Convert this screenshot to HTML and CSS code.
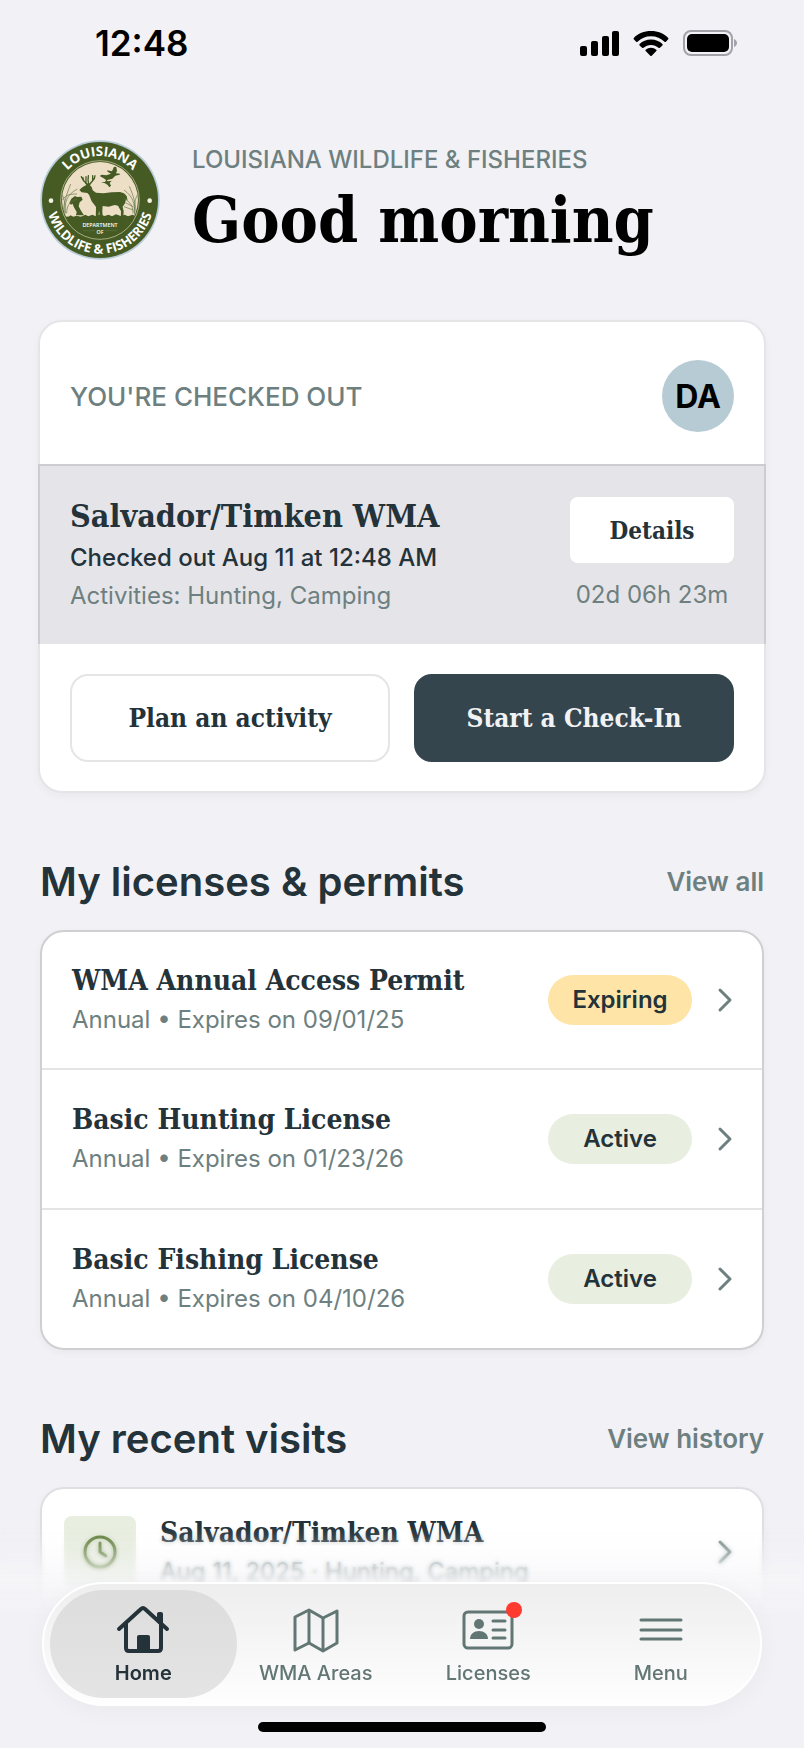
FILE: index.html
```html
<!DOCTYPE html>
<html lang="en">
<head>
    <meta charset="UTF-8">
    <meta name="viewport" content="width=device-width, initial-scale=1.0">
    <title>Louisiana Wildlife & Fisheries</title>
    <link rel="stylesheet" href="styles.css">
</head>
<body>

    <!-- Status bar -->
    <div class="status-bar">
        <span class="time">12:48</span>
        <div class="status-icons">
            <svg width="39" height="25" viewBox="0 0 39 25">
                <rect x="0" y="15" width="7" height="10" rx="2"/>
                <rect x="11" y="10" width="7" height="15" rx="2"/>
                <rect x="22" y="5" width="7" height="20" rx="2"/>
                <rect x="32" y="0" width="7" height="25" rx="2"/>
            </svg>
            <svg width="36" height="25" viewBox="0 0 36 25">
                <path d="M18 0C11 0 5 2.600 .8 6.900c-.4.400-.4 1 0 1.400l2.300 2.400c.4.400 1 .4 1.400 0C8 7.200 12.700 5.200 18 5.200s10 2 13.500 5.500c.4.400 1 .4 1.400 0l2.300-2.400c.4-.4.400-1 0-1.400C31 2.600 25 0 18 0z"/>
                <path d="M18 8.500c-4.500 0-8.500 1.700-11.400 4.500-.4.400-.4 1 0 1.400l2.500 2.400c.4.400 1 .4 1.400 0 2-1.800 4.600-2.900 7.500-2.900s5.500 1.100 7.500 2.900c.4.400 1 .4 1.400 0l2.500-2.400c.4-.4.400-1 0-1.400C26.500 10.200 22.500 8.500 18 8.500z"/>
                <path d="M18 16.800c-2 0-3.900.7-5.300 2-.4.300-.4.900 0 1.300l4.600 4.600c.4.400 1 .4 1.400 0l4.600-4.600c.4-.4.400-1 0-1.300-1.400-1.300-3.300-2-5.300-2z"/>
            </svg>
            <svg width="55" height="26" viewBox="0 0 55 26">
                <rect x="1" y="1" width="48" height="24" rx="7" fill="none" stroke="#a3a2a8" stroke-width="2"/>
                <rect x="4" y="4" width="42" height="18" rx="5"/>
                <path d="M51 9c2 .8 3 2.300 3 4s-1 3.200-3 4z" fill="#a3a2a8"/>
            </svg>
        </div>
    </div>

    <main class="page">

        <!-- Greeting -->
        <header class="greeting">
            <svg class="seal" viewBox="30 30 360 360">
                <defs>
                    <path id="arcTop" d="M78 210a132 132 0 0 1 264 0"/>
                    <path id="arcBottom" d="M49 210a161 161 0 0 0 322 0"/>
                    <clipPath id="scene"><circle cx="210" cy="210" r="114"/></clipPath>
                </defs>
                <circle cx="210" cy="210" r="179" fill="#b6cbd6"/>
                <circle cx="210" cy="210" r="174" fill="#455b23"/>
                <circle cx="210" cy="210" r="118" fill="none" stroke="#d9d3b0" stroke-width="2"/>
                <g clip-path="url(#scene)">
                    <rect x="90" y="90" width="240" height="170" fill="#ecdfc6"/>
                    <path fill="#455b23" d="M90 266l12-6 9 4 11-8 8 5 10-4 12 4 14-7 9 5 12-5 10 5 14-6 12 5 13-4 10 5 12-6 14 5 12-4 10 5 14-5 12 6v75H90z"/>
                    <!-- deer -->
                    <path fill="#455b23" d="M148 180l10-9 11-6-5-9 11 5 9-3-4 8 5 5 3 10 10 7 22 2 25-3 25-1 12 4 8 8 3 14-5-4-3 12-7 10 3 14-2 30h-7l1-30-9-17-10-2-18 5-18-2-1 16 2 30h-7l-5-32-3 32h-7l1-43-13-17-8-20-5-5-17-2z"/>
                    <g fill="none" stroke="#455b23" stroke-width="4" stroke-linecap="round">
                        <path d="M171 163c-5-7-13-8-12-20M161 153l-7-13M176 162c-2-9-3-12-1-25M181 161c4-8 14-10 14-24M188 151l0-14M168 158l0-18"/>
                    </g>
                    <!-- birds -->
                    <path fill="#455b23" d="M209 138l6-4 14 2 14-5-10-6-2-4 15 3 6-14 7 1 2 11-3 8 12 1-1 3-13 3-9 9-18 5-8-6z"/>
                    <path fill="#455b23" d="M213 157l12-1 4-7 5 5 11-2-6 7 4 8-5 5-5-7-8-5z"/>
                    <!-- fish -->
                    <path fill="#455b23" d="M118 219l6-13 11-8 6 3 13-1 4 9-9 8-3 12 8 15 8 12h-24l2-10-9-16-3-9-5 3z"/>
                    <!-- reeds -->
                    <g fill="none" stroke="#64764a" stroke-width="2">
                        <path d="M104 255c0-40 5-60 38-78M99 245c5-35 12-55 23-83M98 210c8-15 20-18 43-18M94 190c8 10 12 30 12 60M110 250c0-25 10-35 30-42"/>
                        <path d="M314 255c0-38-5-55-32-75M318 245c-3-34-9-50-20-76M325 190c-10 15-12 30-12 60M309 250c0-25-10-35-28-45"/>
                        <path d="M282 230l28 10M286 218l24 12"/>
                    </g>
                </g>
                <g fill="#f4f1e4">
                    <circle cx="63" cy="212" r="7"/>
                    <circle cx="359" cy="212" r="7"/>
                </g>
                <g class="seal-text">
                    <text class="seal-ring"><textPath href="#arcTop" startOffset="50%">LOUISIANA</textPath></text>
                    <text class="seal-ring seal-low"><textPath href="#arcBottom" startOffset="50%">WILDLIFE &amp; FISHERIES</textPath></text>
                    <text class="seal-small" x="210" y="290">DEPARTMENT</text>
                    <text class="seal-small" x="210" y="312">OF</text>
                </g>
                <path d="M160 302h36M224 302h36" stroke="#7f8d62" stroke-width="1"/>
            </svg>
            <div>
                <p class="agency">LOUISIANA WILDLIFE &amp; FISHERIES</p>
                <h1>Good morning</h1>
            </div>
        </header>

        <!-- Check-in card -->
        <section class="checkin">
            <div class="checkin-top">
                <h2>YOU'RE CHECKED OUT</h2>
                <span class="avatar">DA</span>
            </div>
            <div class="checkin-info">
                <div>
                    <h3>Salvador/Timken WMA</h3>
                    <p class="checked-out">Checked out Aug 11 at 12:48 AM</p>
                    <p class="muted">Activities: Hunting, Camping</p>
                </div>
                <div class="checkin-side">
                    <button class="details">Details</button>
                    <span class="muted">02d 06h 23m</span>
                </div>
            </div>
            <div class="checkin-actions">
                <button class="action">Plan an activity</button>
                <button class="action dark">Start a Check-In</button>
            </div>
        </section>

        <!-- Licenses -->
        <section class="section">
            <div class="section-head">
                <h2>My licenses &amp; permits</h2>
                <a href="#">View all</a>
            </div>
            <div class="list">
                <a class="row" href="#">
                    <div class="row-text">
                        <h3>WMA Annual Access Permit</h3>
                        <p>Annual • Expires on 09/01/25</p>
                    </div>
                    <span class="badge expiring">Expiring</span>
                    <svg class="chevron" viewBox="0 0 16 26"><path d="M3 3l10 10L3 23"/></svg>
                </a>
                <a class="row" href="#">
                    <div class="row-text">
                        <h3>Basic Hunting License</h3>
                        <p>Annual • Expires on 01/23/26</p>
                    </div>
                    <span class="badge">Active</span>
                    <svg class="chevron" viewBox="0 0 16 26"><path d="M3 3l10 10L3 23"/></svg>
                </a>
                <a class="row" href="#">
                    <div class="row-text">
                        <h3>Basic Fishing License</h3>
                        <p>Annual • Expires on 04/10/26</p>
                    </div>
                    <span class="badge">Active</span>
                    <svg class="chevron" viewBox="0 0 16 26"><path d="M3 3l10 10L3 23"/></svg>
                </a>
            </div>
        </section>

        <!-- Visits -->
        <section class="section">
            <div class="section-head">
                <h2>My recent visits</h2>
                <a href="#">View history</a>
            </div>
            <div class="list visits">
                <a class="row" href="#">
                    <span class="visit-icon">
                        <svg width="34" height="34" viewBox="0 0 34 34"><circle cx="17" cy="17" r="15"/><path d="M17 8v9l6 4"/></svg>
                    </span>
                    <div class="row-text">
                        <h3>Salvador/Timken WMA</h3>
                        <p>Aug 11, 2025 · Hunting, Camping</p>
                    </div>
                    <svg class="chevron" viewBox="0 0 16 26"><path d="M3 3l10 10L3 23"/></svg>
                </a>
            </div>
        </section>
    </main>

    <!-- Bottom navigation -->
    <div class="bottom">
        <div class="fade"></div>
        <nav class="tabs">
            <a class="tab current" href="#">
                <svg width="54" height="48" viewBox="0 0 54 48">
                    <g fill="none" stroke="#243239" stroke-width="4" stroke-linecap="round" stroke-linejoin="round">
                        <path d="M3 24L25 4q2-2 4 0l22 20"/>
                        <path d="M10 19v24q0 3 3 3h29q3 0 3-3V19"/>
                    </g>
                    <path d="M41 9q0-2 2-2h2q2 0 2 2v13l-6-5z" fill="#243239"/>
                    <path d="M21 46V32q0-2 2-2h9q2 0 2 2v14z" fill="#243239"/>
                </svg>
                <span>Home</span>
            </a>
            <a class="tab" href="#">
                <svg width="54" height="48" viewBox="0 0 54 48">
                    <g fill="none" stroke="#627674" stroke-width="3" stroke-linejoin="round">
                        <path d="M6 12l14-7 14 8 14-7v32l-14 8-14-8-14 7z"/>
                        <path d="M20 5v33M34 13v33"/>
                    </g>
                </svg>
                <span>WMA Areas</span>
            </a>
            <a class="tab" href="#">
                <svg width="54" height="48" viewBox="0 0 54 48">
                    <rect x="3" y="7" width="48" height="36" rx="4" fill="none" stroke="#627674" stroke-width="3"/>
                    <ellipse cx="18" cy="19" rx="5" ry="5" fill="#627674"/>
                    <path d="M9 34c0-5 4-8 9-8s9 3 9 8z" fill="#627674"/>
                    <path d="M32 16h12M32 25h12M32 33h12" stroke="#627674" stroke-width="3" stroke-linecap="round"/>
                </svg>
                <span>Licenses</span>
                <i class="dot"></i>
            </a>
            <a class="tab" href="#">
                <svg width="54" height="48" viewBox="0 0 54 48">
                    <path d="M7 15h40M7 25h40M7 34h40" stroke="#627674" stroke-width="3" stroke-linecap="round"/>
                </svg>
                <span>Menu</span>
            </a>
        </nav>
        <div class="home-indicator"></div>
    </div>

</body>
</html>
```

FILE: styles.css
```css
* {
    box-sizing: border-box;
}
body {
    margin: 0;
    min-height: 100vh;
    background-color: #f2f1f6;
    color: #243239;
    font-family: Inter, sans-serif;
    font-size: 24px;
}
h1, h2, h3, p {
    margin: 0;
}
a {
    color: inherit;
    text-decoration: none;
}
button {
    font-family: "DejaVu Serif Condensed", "DejaVu Serif", serif;
    font-weight: bold;
    color: #243239;
    cursor: pointer;
}
.muted {
    color: #6d807f;
}

/* Status bar */
.status-bar {
    display: flex;
    justify-content: space-between;
    align-items: center;
    height: 86px;
    padding: 0 66px 0 95px;
    color: #000;
}
.time {
    font-size: 35px;
    font-weight: 600;
}
.status-icons {
    display: flex;
    align-items: center;
    gap: 14px;
}

.page {
    padding: 54px 40px 0;
}

/* Greeting */
.greeting {
    display: flex;
    align-items: center;
    gap: 32px;
    height: 120px;
}
.seal {
    width: 120px;
    height: 120px;
    flex-shrink: 0;
}
.seal-text {
    fill: #fff;
    text-anchor: middle;
    font-family: "Open Sans", sans-serif;
}
.seal-ring {
    font-size: 40px;
    font-weight: 700;
}
.seal-low {
    font-size: 39px;
}
.seal-small {
    font-size: 16px;
    font-weight: 600;
}
.agency {
    color: #6d807f;
    font-weight: 500;
    line-height: 32px;
}
h1 {
    padding-top: 8px;
    font-family: "DejaVu Serif Condensed", "DejaVu Serif", serif;
    font-size: 64px;
    line-height: 72px;
    color: #000;
    white-space: nowrap;
}

/* Check-in card */
.checkin {
    margin: 60px -2px 0;
    background-color: #fff;
    border: 2px solid #e5e5e8;
    border-radius: 24px;
    box-shadow: 0 3px 8px rgba(0, 0, 0, 0.04);
}
.checkin-top {
    display: flex;
    justify-content: space-between;
    align-items: center;
    height: 142px;
    padding: 6px 30px 0;
}
.checkin-top h2 {
    font-size: 26px;
    font-weight: 500;
    color: #6d807f;
}
.avatar {
    display: flex;
    justify-content: center;
    align-items: center;
    width: 72px;
    height: 72px;
    border-radius: 50%;
    background-color: #b7cbd4;
    color: #000;
    font-size: 32px;
    font-weight: 700;
}
.checkin-info {
    display: flex;
    justify-content: space-between;
    margin: 0 -2px;
    padding: 31px 30px 29px;
    background-color: #e5e4e9;
    border: 2px solid #cdccd1;
    border-bottom: none;
}
.checkin-info h3 {
    margin-bottom: 4px;
    font-family: "DejaVu Serif Condensed", "DejaVu Serif", serif;
    font-size: 32px;
    line-height: 38px;
}
.checkin-info p {
    line-height: 38px;
}
.checked-out {
    font-weight: 500;
}
.checkin-side {
    display: flex;
    flex-direction: column;
    align-items: center;
    gap: 17px;
}
.details {
    width: 164px;
    height: 66px;
    background-color: #fff;
    border: none;
    border-radius: 8px;
    font-size: 24px;
}
.checkin-actions {
    display: flex;
    gap: 24px;
    padding: 30px 30px 29px;
}
.action {
    flex: 1;
    height: 88px;
    background-color: #fff;
    border: 2px solid #e5e5e6;
    border-radius: 18px;
    font-size: 26px;
}
.action.dark {
    background-color: #34454e;
    border-color: #34454e;
    color: #f2f2f3;
}

/* Sections */
.section {
    margin-top: 64px;
}
.section-head {
    display: flex;
    justify-content: space-between;
    align-items: center;
    height: 48px;
    margin-bottom: 25px;
}
.section-head h2 {
    font-size: 40px;
    font-weight: 600;
}
.section-head a {
    font-size: 26px;
    font-weight: 600;
    color: #6d807f;
}
.list {
    background-color: #fff;
    border: 2px solid #cfcfd2;
    border-radius: 24px;
    box-shadow: 0 3px 8px rgba(0, 0, 0, 0.04);
}
.row {
    display: flex;
    align-items: center;
    height: 136px;
    padding: 0 29px 0 30px;
}
.row + .row {
    height: 140px;
    border-top: 2px solid #e4e4e6;
}
.row-text {
    flex: 1;
}
.row h3 {
    font-family: "DejaVu Serif Condensed", "DejaVu Serif", serif;
    font-size: 28px;
    line-height: 40px;
    white-space: nowrap;
}
.row p {
    line-height: 38px;
    color: #6d807f;
}
.badge {
    width: 144px;
    padding: 10px 0;
    border-radius: 25px;
    background-color: #e8eee0;
    line-height: 30px;
    font-weight: 600;
    text-align: center;
}
.badge.expiring {
    background-color: #ffe4a8;
}
.chevron {
    width: 16px;
    height: 26px;
    margin-left: 25px;
    fill: none;
    stroke: #6d807f;
    stroke-width: 3;
    stroke-linecap: round;
    stroke-linejoin: round;
}
.visits {
    border-color: #dfdfe3;
}
.visits .row {
    height: 126px;
    padding-left: 22px;
}
.visit-icon {
    display: flex;
    justify-content: center;
    align-items: center;
    width: 72px;
    height: 72px;
    margin-right: 24px;
    border-radius: 8px;
    background-color: #e8eee0;
}
.visit-icon svg {
    fill: none;
    stroke: #5c7a37;
    stroke-width: 3;
    stroke-linecap: round;
    stroke-linejoin: round;
}

/* Bottom navigation */
.bottom {
    position: fixed;
    left: 0;
    right: 0;
    bottom: 0;
    padding: 0 42px 16px;
}
.fade {
    position: absolute;
    left: 0;
    right: 0;
    top: -56px;
    bottom: 0;
    background: linear-gradient(rgba(242, 241, 246, 0), rgba(246, 246, 249, 0.75) 54px, #f2f1f6 88px);
    backdrop-filter: blur(2px);
    -webkit-mask-image: linear-gradient(transparent, #000 50px);
    mask-image: linear-gradient(transparent, #000 50px);
}
.tabs {
    position: relative;
    display: flex;
    height: 124px;
    padding: 6px 13px;
    border: 2px solid #fff;
    border-radius: 62px;
    background: linear-gradient(#eeeeee, #f5f5f5 45%, #fefefe);
    box-shadow: 0 4px 24px rgba(0, 0, 0, 0.04);
}
.tab {
    position: relative;
    display: flex;
    flex: 1;
    flex-direction: column;
    align-items: center;
    margin: 0 -7px;
    padding-top: 15px;
    border-radius: 54px;
    color: #627674;
    font-size: 20px;
    font-weight: 500;
    line-height: 24px;
}
.tab svg {
    margin-bottom: 8px;
}
.tab.current {
    background: linear-gradient(#dddddd, #e4e4e4);
    color: #243239;
    font-weight: 600;
}
.dot {
    position: absolute;
    top: 12px;
    left: 50%;
    width: 16px;
    height: 16px;
    margin-left: 18px;
    border-radius: 50%;
    background-color: #ff3b30;
}
.home-indicator {
    position: relative;
    width: 40%;
    max-width: 288px;
    height: 10px;
    margin: 16px auto 0;
    border-radius: 5px;
    background-color: #000;
}
```
